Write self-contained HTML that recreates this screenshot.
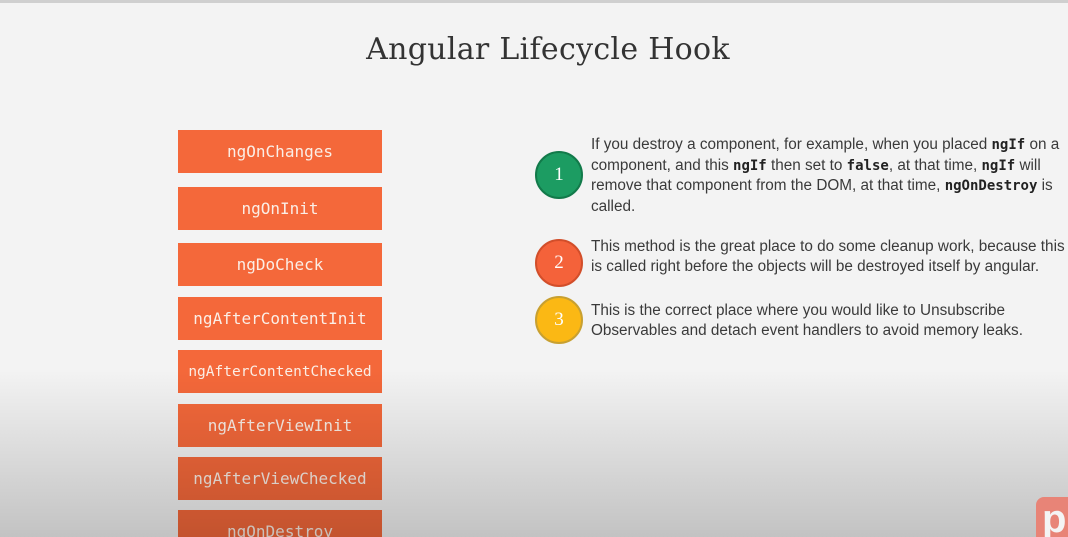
<!DOCTYPE html>
<html style="overflow:hidden;width:1068px;height:537px"><head><style>
body{margin:0;width:1068px;height:537px;overflow:hidden;background:#f3f3f3;font-family:"Liberation Sans",sans-serif;position:relative}
.top{position:absolute;left:0;top:0;width:1068px;height:3px;background:#cfcfcf}
h1{position:absolute;left:0;width:1096px;top:32px;margin:0;text-align:center;font-family:"DejaVu Serif",serif;font-weight:normal;font-size:30px;color:#333;letter-spacing:0.3px}
.b{position:absolute;left:178px;width:204px;height:43px;background:#f4683a;color:#fbeee6;font-family:"DejaVu Sans Mono","Liberation Mono",monospace;font-size:16px;display:flex;align-items:center;justify-content:center}
.c{position:absolute;left:535px;width:44px;height:44px;border-radius:50%;color:#fff;font-family:"Liberation Serif",serif;font-size:19px;display:flex;align-items:center;justify-content:center}
.t{position:absolute;left:591px;font-size:15.3px;line-height:19.5px;color:#3a3a3a;width:480px;white-space:nowrap}
code{font-family:"DejaVu Sans Mono",monospace;font-size:14px;color:#222;font-weight:bold}
.shade{position:absolute;left:0;top:370px;width:1068px;height:167px;background:linear-gradient(rgba(0,0,0,0),rgba(0,0,0,0.2))}
.p{position:absolute;left:1036px;top:497px;width:40px;height:50px;border-radius:8px;background:#e88477;color:#f4f4f4;font:bold 40px "Liberation Sans",sans-serif;line-height:44px;padding-left:6px;box-sizing:border-box}
</style></head><body>
<div class="top"></div>
<h1>Angular Lifecycle Hook</h1>
<div class="b" style="top:130px">ngOnChanges</div>
<div class="b" style="top:187px">ngOnInit</div>
<div class="b" style="top:243px">ngDoCheck</div>
<div class="b" style="top:297px">ngAfterContentInit</div>
<div class="b" style="top:350px;font-size:14.5px">ngAfterContentChecked</div>
<div class="b" style="top:404px">ngAfterViewInit</div>
<div class="b" style="top:457px">ngAfterViewChecked</div>
<div class="b" style="top:510px;height:27px;align-items:flex-start;padding-top:12px;box-sizing:border-box">ngOnDestroy</div>
<div class="c" style="top:151px;background:#1c9c62;border:2px solid #127a4a">1</div>
<div class="c" style="top:239px;background:#f4623a;border:2px solid #d24e2a">2</div>
<div class="c" style="top:296px;background:#fbb814;border:2px solid #c8a030">3</div>
<div class="t" style="top:135px">If you destroy a component, for example, when you placed <code>ngIf</code> on a<br>component, and this <code>ngIf</code> then set to <code>false</code>, at that time, <code>ngIf</code> will<br>remove that component from the DOM, at that time, <code>ngOnDestroy</code> is<br>called.</div>
<div class="t" style="top:237px">This method is the great place to do some cleanup work, because this<br>is called right before the objects will be destroyed itself by angular.</div>
<div class="t" style="top:301px">This is the correct place where you would like to Unsubscribe<br>Observables and detach event handlers to avoid memory leaks.</div>
<div class="shade"></div>
<div class="p">p</div>
</body></html>
